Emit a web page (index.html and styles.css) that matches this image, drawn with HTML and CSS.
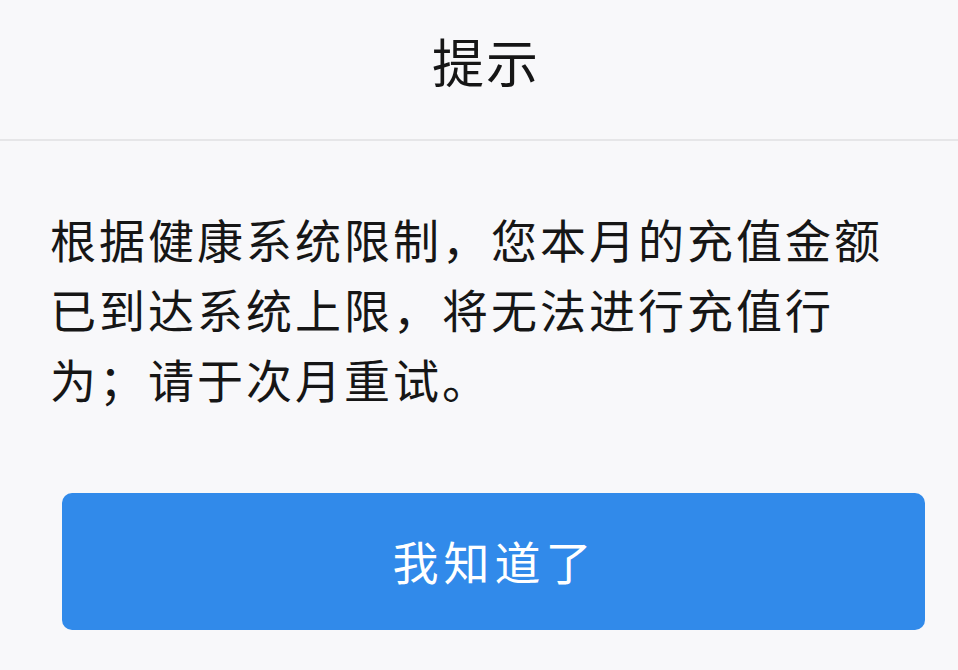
FILE: index.html
```html
<!DOCTYPE html>
<html lang="zh-CN">
<head>
<meta charset="utf-8">
<title>提示</title>
<link rel="stylesheet" href="styles.css">
</head>
<body>
<div class="dialog">
  <header class="dialog-head">
    <h1 class="dialog-title">提示</h1>
  </header>
  <div class="dialog-body">
    <p class="dialog-msg">根据健康系统限制，您本月的充值金额已到达系统上限，将无法进行充值行为；请于次月重试。</p>
  </div>
  <div class="dialog-foot">
    <button class="btn-confirm" type="button">我知道了</button>
  </div>
</div>
</body>
</html>
```

FILE: styles.css
```css
html, body {
  margin: 0;
  padding: 0;
  background: #f8f8fa;
}

body {
  width: 958px;
  height: 670px;
  overflow: hidden;
  font-family: "Noto Sans CJK SC", "Noto Sans", sans-serif;
  color: #161616;
}

.dialog {
  display: flex;
  flex-direction: column;
}

.dialog-head {
  height: 139px;
  border-bottom: 2px solid #e6e6e8;
  display: flex;
  align-items: center;
  justify-content: center;
}

.dialog-title {
  margin: 0 0 18px 0;
  font-size: 52px;
  font-weight: 400;
  letter-spacing: 2px;
  line-height: 1;
  padding-left: 14px;
}

.dialog-body {
  padding: 62px 50px 0 50px;
}

.dialog-msg {
  margin: 0;
  font-size: 46px;
  line-height: 70px;
  letter-spacing: 3px;
}

.dialog-foot {
  padding: 80px 33px 0 62px;
}

.btn-confirm {
  display: block;
  width: 100%;
  height: 137px;
  border: 0;
  border-radius: 10px;
  background: #318aea;
  color: #ffffff;
  font-family: "Noto Sans CJK SC", "Noto Sans", sans-serif;
  font-size: 46px;
  letter-spacing: 5px;
  padding: 0 0 4px 2px;
  line-height: 1;
}
```
